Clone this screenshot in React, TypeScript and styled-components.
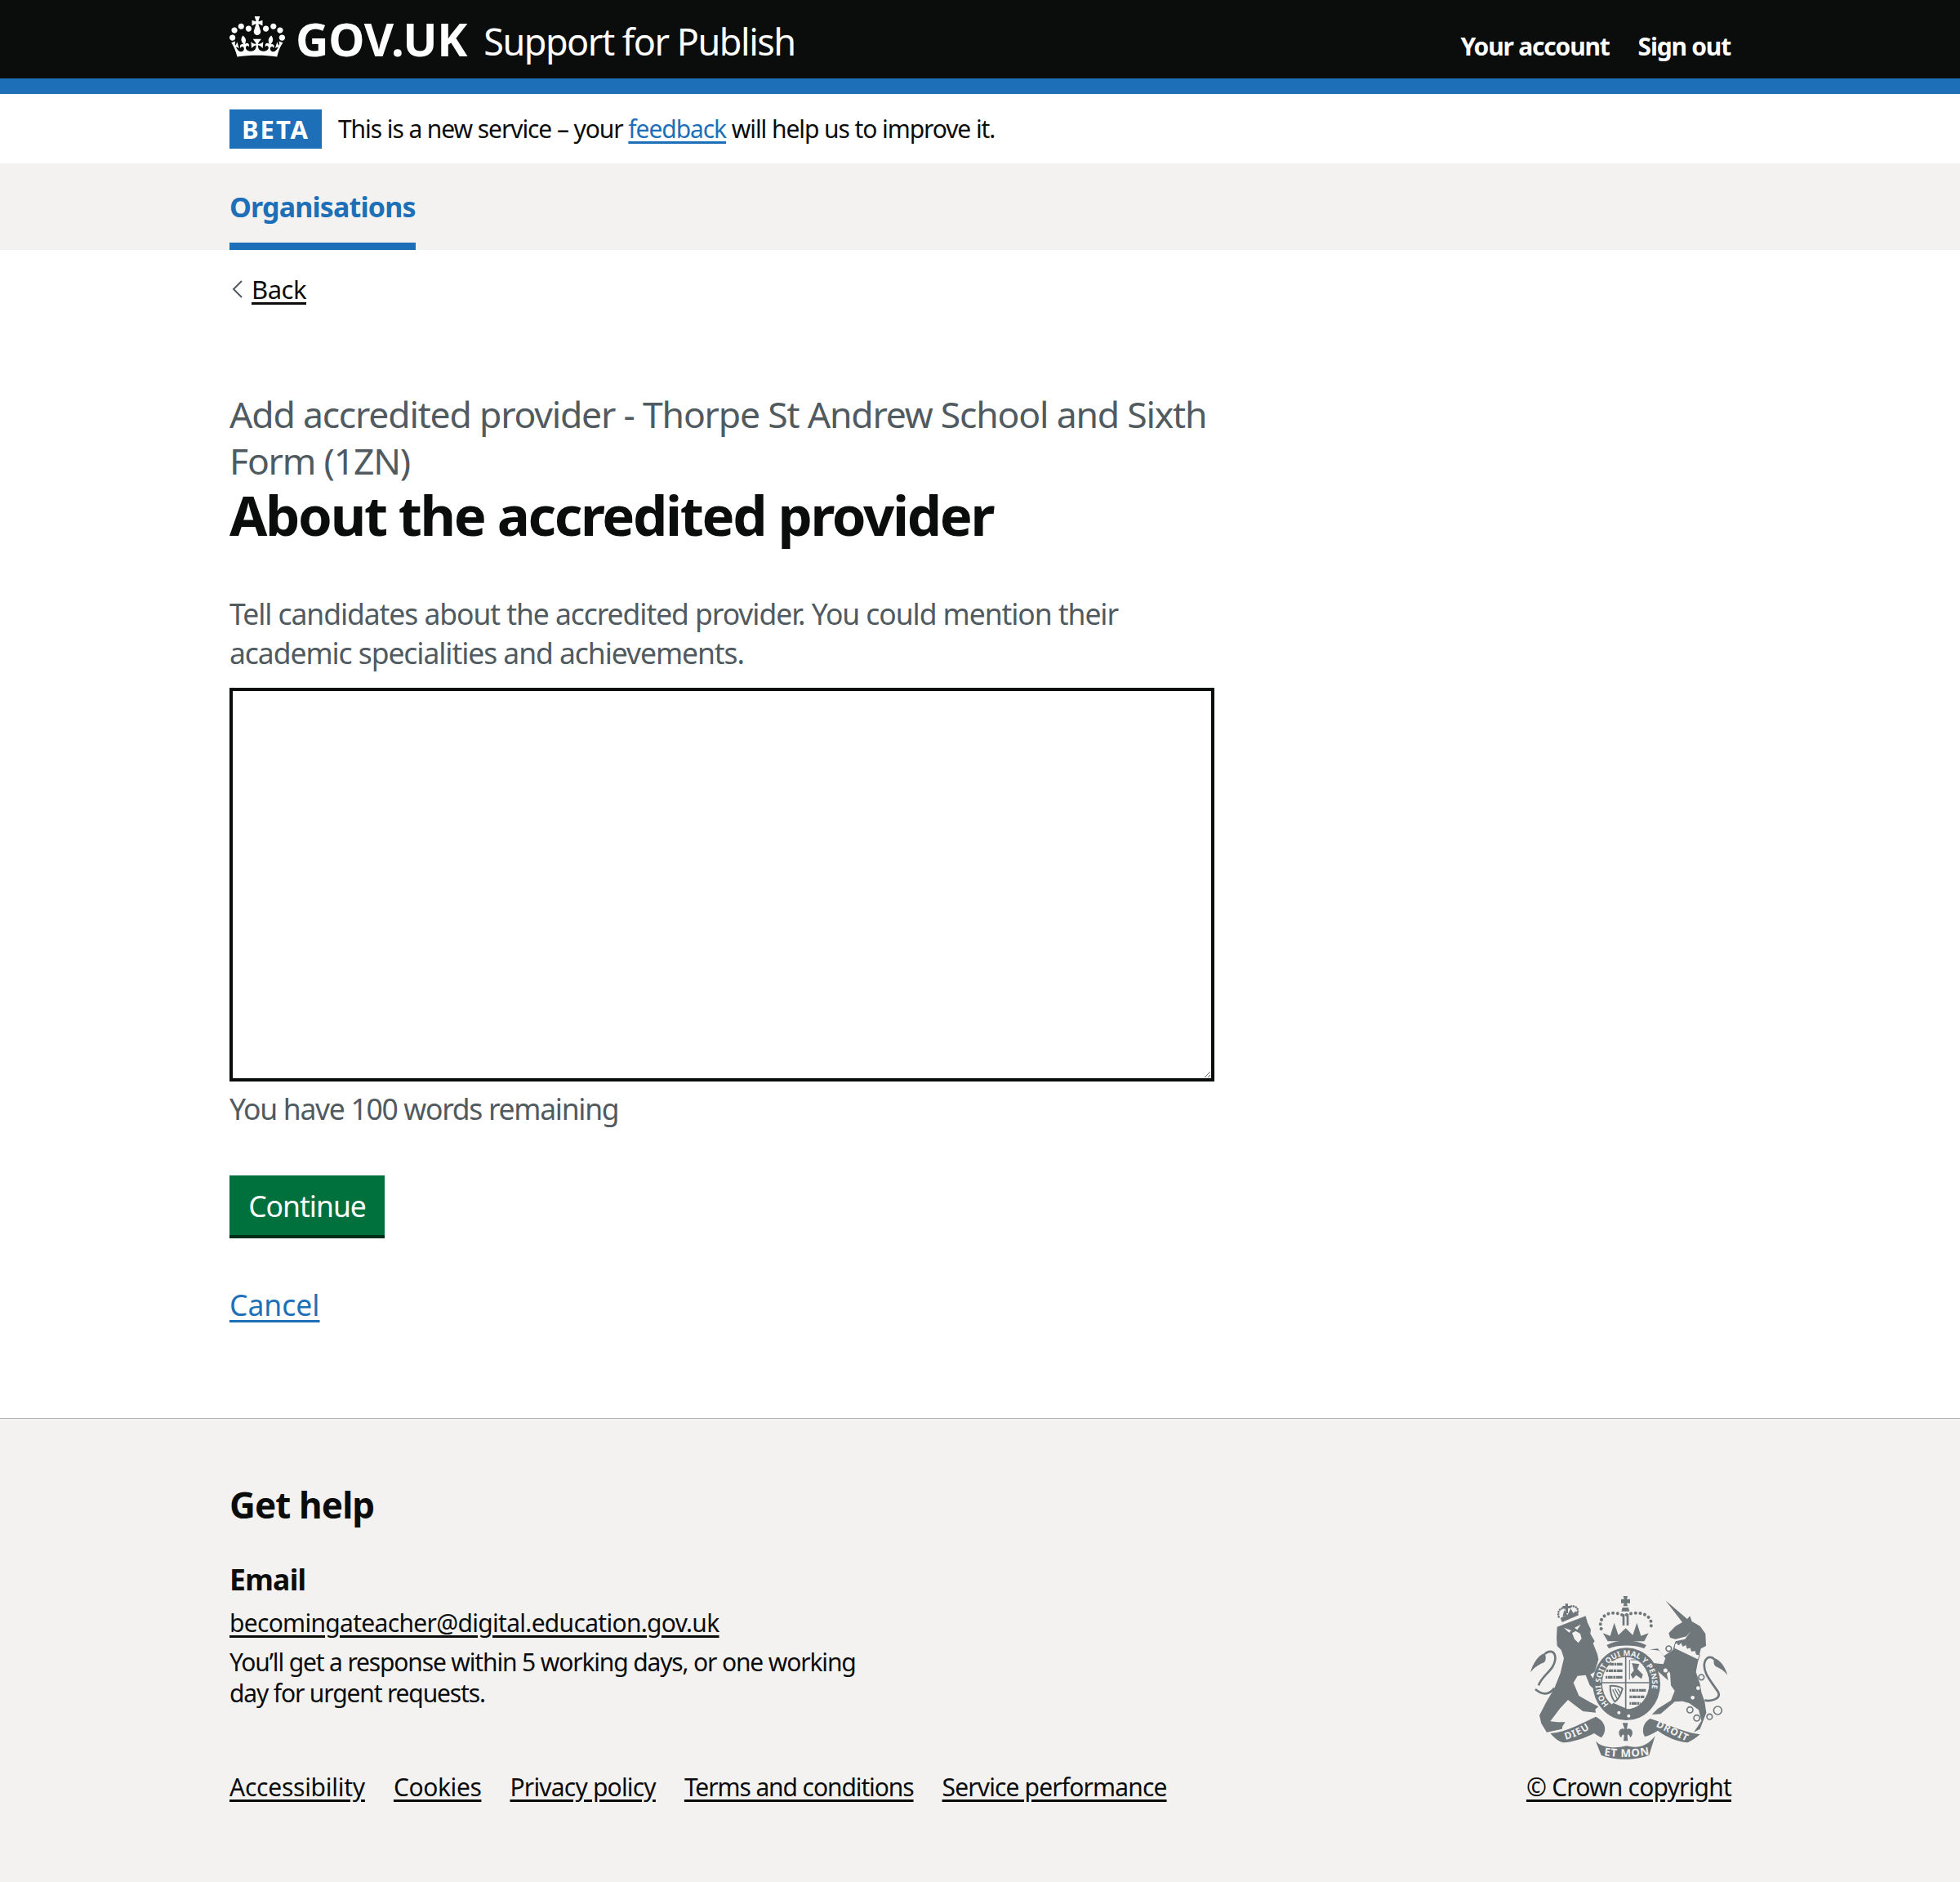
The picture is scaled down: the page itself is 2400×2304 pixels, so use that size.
import React from "react";
import styled, { createGlobalStyle } from "styled-components";

const Global = createGlobalStyle`
  html, body { margin: 0; padding: 0; background: #fff; }
  body { font-family: "Noto Sans", "Open Sans", Arial, sans-serif; color: #0b0c0c; }
  * { box-sizing: border-box; }
`;

const Band = styled.div`
  padding: 0 280px 0 281px;
`;

const Header = styled(Band)`
  background: #0b0c0c;
  height: 115px;
  border-bottom: 19px solid #1d70b8;
  display: flex;
  justify-content: space-between;
  align-items: flex-start;
  color: #fff;
`;

const Brand = styled.div`
  display: flex;
  align-items: flex-start;
  padding-top: 20px;
`;

const Crown = styled.svg`
  width: 68px;
  height: 50px;
  fill: #fff;
  flex: none;
`;

const Logotype = styled.span`
  font-size: 56px;
  font-weight: 700;
  line-height: 48px;
  letter-spacing: -0.3px;
  margin: 3px 0 0 13px;
`;

const ServiceName = styled.span`
  font-size: 45px;
  line-height: 60px;
  letter-spacing: -1.5px;
  margin: 1px 0 0 20px;
`;

const HeaderNav = styled.nav`
  display: flex;
  gap: 35px;
  padding-top: 36px;
  padding-right: 1px;
`;

const HeaderLink = styled.a`
  font-size: 30px;
  line-height: 42px;
  letter-spacing: -1.2px;
  font-weight: 700;
  color: #fff;
`;

const BetaBanner = styled(Band)`
  height: 85px;
  display: flex;
  align-items: center;
  gap: 20px;
  padding-top: 1px;
  border-bottom: 1px solid #fff;
`;

const BetaTag = styled.strong`
  display: block;
  width: 113px;
  height: 48px;
  background: #1d70b8;
  color: #fff;
  font-size: 31px;
  line-height: 48px;
  letter-spacing: 2px;
  text-align: center;
`;

const BetaText = styled.span`
  font-size: 30px;
  line-height: 48px;
  letter-spacing: -1.08px;
`;

const InlineLink = styled.a`
  color: #1d70b8;
  text-decoration: underline;
  text-underline-offset: 4px;
`;

const SubNav = styled(Band)`
  background: #f3f2f1;
  height: 106px;
`;

const SubNavItem = styled.a`
  display: inline-block;
  height: 106px;
  padding-top: 30px;
  border-bottom: 9px solid #1d70b8;
  color: #1d70b8;
  font-size: 34px;
  line-height: 46px;
  letter-spacing: -0.85px;
  font-weight: 700;
`;

const Main = styled(Band)`
  height: 1430px;
  padding-top: 28px;
`;

const BackLink = styled.a`
  display: inline-flex;
  align-items: center;
  gap: 10px;
  font-size: 31px;
  line-height: 40px;
  letter-spacing: -0.5px;
  color: #0b0c0c;
  text-decoration: underline;
  text-underline-offset: 4px;
`;

const Chevron = styled.svg`
  width: 15px;
  height: 24px;
  fill: none;
  stroke: #505a5f;
  stroke-width: 2;
  flex: none;
  margin-left: 2px;
`;

const Form = styled.div`
  width: 1206px;
  margin-top: 104px;
`;

const Caption = styled.div`
  font-size: 44.5px;
  line-height: 57px;
  letter-spacing: -1.2px;
  color: #505a5f;
`;

const Title = styled.h1`
  margin: 0;
  font-size: 67px;
  line-height: 76px;
  letter-spacing: -2.3px;
  font-weight: 700;
`;

const Hint = styled.p`
  margin: 59px 0 0;
  font-size: 35.5px;
  line-height: 48px;
  letter-spacing: -1.07px;
  color: #505a5f;
`;

const TextArea = styled.textarea`
  display: block;
  width: 1206px;
  height: 482px;
  margin-top: 19px;
  border: 4px solid #0b0c0c;
  border-radius: 0;
  background: #fff;
  outline: none;
`;

const CountMessage = styled.div`
  margin-top: 9px;
  font-size: 35.5px;
  line-height: 48px;
  letter-spacing: -1.3px;
  color: #505a5f;
`;

const Button = styled.button`
  display: block;
  width: 190px;
  height: 77px;
  margin-top: 58px;
  padding: 0;
  border: 0;
  border-bottom: 4px solid #002d18;
  background: #00703c;
  color: #fff;
  font-family: inherit;
  font-size: 35.5px;
  line-height: 48px;
  letter-spacing: -1px;
`;

const CancelLink = styled.a`
  display: inline-block;
  margin-top: 57px;
  font-size: 35.5px;
  line-height: 48px;
  color: #1d70b8;
  text-decoration: underline;
  text-underline-offset: 5px;
`;

const Footer = styled(Band)`
  background: #f3f2f1;
  border-top: 1px solid #b1b4b6;
  height: 568px;
  padding-top: 75px;
  display: grid;
  grid-template-columns: 1fr auto;
  align-items: start;
`;

const FooterMain = styled.div`
  display: flex;
  flex-direction: column;
`;

const HelpTitle = styled.h2`
  margin: 0;
  font-size: 44px;
  line-height: 60px;
  letter-spacing: -0.9px;
  font-weight: 700;
`;

const EmailTitle = styled.h3`
  margin: 37px 0 0;
  font-size: 35.5px;
  line-height: 48px;
  letter-spacing: -0.7px;
  font-weight: 700;
`;

const FooterLink = styled.a<{ $tracking: number }>`
  font-size: 30px;
  line-height: 38px;
  letter-spacing: ${(p) => p.$tracking}px;
  color: #0b0c0c;
  text-decoration: underline;
  text-underline-offset: 4px;
`;

const EmailRow = styled.div`
  margin-top: 11px;
  line-height: 38px;
  display: flex;
`;

const HelpText = styled.p`
  margin: 10px 0 0;
  width: 790px;
  font-size: 30px;
  line-height: 38px;
  letter-spacing: -1.15px;
`;

const FooterLinks = styled.div`
  display: flex;
  gap: 35px;
  line-height: 38px;
  margin-top: 77px;
`;

const Copyright = styled.div`
  align-self: end;
  display: flex;
  flex-direction: column;
  align-items: flex-end;
  padding-bottom: 97px;
  line-height: 38px;
`;

const CrestSvg = styled.svg`
  display: block;
  width: 250px;
  height: 210px;
  margin-bottom: 9px;
`;

const crest = "#6f777b";
const bg = "#f3f2f1";

const Crest = () => (
  <CrestSvg viewBox="0 0 750 630" role="img" aria-label="Royal coat of arms">
    <defs>
      <path id="garter" d="M300 410 A94 104 0 1 1 430 410" />
      <path id="ribbonLeft" d="M142 540 Q195 525 245 490" />
      <path id="ribbonRight" d="M472 490 Q525 518 590 548" />
      <path id="ribbonMid" d="M278 596 Q365 610 452 594" />
    </defs>

    {/* lion */}
    <g fill={crest}>
      <path d="M110 125 L215 85 L222 110 L234 135 L232 150 L248 178 L242 185 L258 225 L262 245 L248 290 L232 300 L250 325 L275 345 L262 352 L270 362 L250 358 L230 340 L215 302 L185 305 L170 330 L190 378 L232 402 L262 418 L250 428 L252 440 L205 435 L172 410 L150 393 L120 425 L85 472 L112 475 L140 475 L130 490 L128 500 L72 512 L52 480 L45 450 L68 405 L100 350 L122 295 L135 240 L125 210 L110 195 L108 165 Z" />
      <path d="M65 222 C40 228 20 262 12 292 C28 272 46 262 62 256 C70 248 70 236 65 222 Z" />
      <path d="M100 350 C80 376 55 376 30 354 M42 340 C55 300 106 282 103 235 C100 210 76 212 65 225" fill="none" stroke={crest} strokeWidth="8" />
      <path d="M135 128 L162 138 L154 146 Z M197 116 L174 128 L184 136 Z M165 148 L178 140 L195 150 L200 168 L188 184 L174 170 Z" fill={bg} />
      <path d="M122 92 L185 68 L189 82 L128 108 Z" />
      <path d="M116 88 C108 62 130 50 146 58 C160 42 190 48 186 70" fill="none" stroke={crest} strokeWidth="8" strokeLinecap="round" strokeDasharray="0.1 9" />
      <path d="M140 40 h10 v8 h10 v9 h-10 v18 h-10 v-18 h-10 v-9 h10 Z" />
      <path d="M130 88 L136 64 L148 82 L160 58 L170 76 L178 66 L180 76 Z" />
    </g>

    {/* royal crown */}
    <g fill={crest}>
      <path d="M353 12 h16 l-3 11 h12 v15 h-12 l3 11 h-16 l3 -11 h-11 v-15 h11 Z" />
      <path d="M350 54 h22 l4 14 h-30 Z" />
      <rect x="350" y="78" width="8" height="42" />
      <rect x="365" y="78" width="8" height="42" />
      <path d="M272 132 C258 92 298 56 355 84 C425 56 470 92 452 132" fill="none" stroke={crest} strokeWidth="12" strokeLinecap="round" strokeDasharray="0.1 17" />
      <path d="M278 148 L305 158 L320 110 L335 155 L362 130 L388 155 L403 110 L418 158 L446 148 L430 178 L296 178 Z" />
      <path d="M292 192 C335 170 392 170 438 192 L430 204 C392 190 335 190 300 204 Z" />
    </g>

    {/* garter, shield */}
    <g>
      <ellipse cx="365" cy="335" rx="124" ry="133" fill={crest} />
      <ellipse cx="362" cy="332" rx="88" ry="98" fill={bg} stroke={crest} strokeWidth="3" />
      <path d="M362 234 V430 M275 330 H450" stroke={crest} strokeWidth="5" />
      <g fill="none" stroke={crest} strokeWidth="10">
        <path d="M296 262 h54" strokeDasharray="6 2 14 2 8 2 20 2" />
        <path d="M290 286 h60" strokeDasharray="8 2 16 2 10 2 22 2" />
        <path d="M288 310 h62" strokeDasharray="6 2 18 2 8 2 24 2" />
        <path d="M376 358 h60" strokeDasharray="6 2 14 2 8 2 30 2" />
        <path d="M376 382 h54" strokeDasharray="8 2 16 2 10 2 22 2" />
        <path d="M376 406 h40" strokeDasharray="6 2 18 2 8 2 24 2" />
      </g>
      <path d="M385 258 L412 262 L405 280 L425 300 L420 316 L400 302 L388 316 L380 300 L392 285 Z" fill={crest} />
      <path d="M380 246 H436 M376 246 V318" stroke={crest} strokeWidth="3" fill="none" />
      <path d="M305 342 C320 340 345 345 350 352 C345 372 335 392 322 400 C312 390 304 365 305 342 Z" fill="none" stroke={crest} strokeWidth="6" />
      <path d="M314 355 L332 392 M322 352 L338 380 M332 352 L344 370" stroke={crest} strokeWidth="4" />
      <path d="M292 432 L316 404 L372 428 L412 418 L432 396 L448 420 C420 462 335 478 292 432 Z" fill={crest} />
      <circle cx="337" cy="440" r="6" fill={bg} />
      <circle cx="373" cy="452" r="6" fill={bg} />
    </g>

    {/* ribbons and fleur */}
    <g fill={crest}>
      <path d="M85 516 C150 510 200 478 252 455 C285 470 298 505 272 532 C262 526 252 520 246 516 C210 535 168 548 132 550 C112 545 98 530 85 516 Z" />
      <path d="M635 520 C575 512 520 485 452 462 C428 475 418 505 432 528 C448 525 462 516 480 506 C510 530 548 545 590 550 C606 542 622 532 635 520 Z" />
      <path d="M252 545 C276 570 325 572 365 562 C405 572 440 565 470 525 L448 596 C400 616 320 616 272 596 Z" />
      <path d="M350 478 h20 l-4 22 c18 -8 30 16 12 32 c-2 -12 -8 -14 -10 -8 l2 20 h-16 l2 -20 c-2 -6 -8 -4 -10 8 c-18 -16 -6 -40 12 -32 Z" />
    </g>

    {/* unicorn */}
    <g fill={crest} transform="translate(330 0)">
      <path d="M178 28 L258 96 L268 85 L275 105 L305 122 L325 150 L327 195 L308 205 L300 240 L290 290 L305 335 L310 365 L322 400 L328 440 L305 500 L282 512 L310 470 L300 430 L265 405 L240 398 L212 400 L160 445 L128 447 L150 425 L198 395 L212 360 L198 340 L195 295 L178 272 L188 322 L150 288 L135 258 L170 262 L178 240 L155 212 L120 208 L150 205 L172 232 L205 210 L215 178 L250 170 L272 140 L255 160 L215 170 L195 165 L190 148 L215 122 L240 108 Z" />
      <path d="M358 240 C378 246 398 272 406 302 C392 284 376 276 362 270 C354 262 354 250 358 240 Z" />
      <path d="M322 395 C350 400 382 388 372 365 C350 330 312 292 322 255 C330 230 350 234 358 245" fill="none" stroke={crest} strokeWidth="8" />
      <path d="M212 190 L220 182 L226 192 L236 182 L242 196 L254 190 L258 204 L270 200 L274 214 L288 212 L292 226 L304 228 L298 246 L210 204 Z" fill={bg} stroke={crest} strokeWidth="3" />
      <circle cx="298" cy="350" r="7" fill={bg} />
      <circle cx="278" cy="385" r="7" fill={bg} />
      <g fill={bg} stroke={crest} strokeWidth="5">
        <circle cx="190" cy="205" r="10" />
        <circle cx="178" cy="285" r="10" />
        <circle cx="310" cy="310" r="10" />
        <circle cx="268" cy="430" r="11" />
        <circle cx="293" cy="460" r="11" />
        <circle cx="340" cy="455" r="10" />
        <circle cx="370" cy="432" r="15" />
      </g>
    </g>

    <g fill={bg} fontFamily="'Noto Sans', sans-serif" fontWeight="700">
      <text fontSize="28" letterSpacing="0.5"><textPath href="#garter" startOffset="0">HONI SOIT QUI MAL Y PENSE</textPath></text>
      <text fontSize="36" letterSpacing="3"><textPath href="#ribbonLeft">DIEU</textPath></text>
      <text fontSize="36" letterSpacing="3"><textPath href="#ribbonRight">DROIT</textPath></text>
      <text fontSize="40" letterSpacing="2"><textPath href="#ribbonMid" startOffset="4">ET MON</textPath></text>
    </g>
  </CrestSvg>
);

export default function App() {
  return (
    <>
      <Global />
      <Header>
        <Brand>
          <Crown viewBox="0 0 132 97" aria-hidden="true">
            <path d="M25 30.2c3.5 1.5 7.7-.2 9.1-3.7 1.5-3.6-.2-7.8-3.9-9.2-3.6-1.4-7.6.3-9.1 3.9-1.4 3.5.3 7.5 3.9 9zM9 39.5c3.6 1.5 7.8-.2 9.2-3.7 1.5-3.6-.2-7.8-3.9-9.1-3.6-1.5-7.6.2-9.1 3.8-1.4 3.5.3 7.5 3.8 9zM4.4 57.2c3.5 1.5 7.7-.2 9.1-3.8 1.5-3.6-.2-7.7-3.9-9.1-3.5-1.5-7.6.3-9.1 3.8-1.4 3.5.3 7.6 3.9 9.1zm38.3-21.4c3.5 1.5 7.7-.2 9.1-3.8 1.5-3.6-.2-7.7-3.9-9.1-3.6-1.5-7.6.3-9.1 3.8-1.3 3.6.4 7.7 3.9 9.1zm64.4-5.6c-3.6 1.5-7.8-.2-9.1-3.7-1.5-3.6.2-7.8 3.8-9.2 3.6-1.4 7.7.3 9.2 3.9 1.3 3.5-.4 7.5-3.9 9zm15.9 9.3c-3.6 1.5-7.7-.2-9.1-3.7-1.5-3.6.2-7.8 3.7-9.1 3.6-1.5 7.7.2 9.2 3.8 1.5 3.5-.3 7.5-3.8 9zm4.7 17.7c-3.6 1.5-7.8-.2-9.2-3.8-1.5-3.6.2-7.7 3.9-9.1 3.6-1.5 7.7.3 9.2 3.8 1.3 3.5-.4 7.6-3.9 9.1zM89.3 35.8c-3.6 1.5-7.8-.2-9.2-3.8-1.4-3.6.2-7.7 3.9-9.1 3.6-1.5 7.7.3 9.2 3.8 1.4 3.6-.3 7.7-3.9 9.1zM69.7 17.7l8.9 4.7V9.3l-8.9 2.8c-.2-.3-.5-.6-.9-.9L72.4 0H59.6l3.5 11.2c-.3.3-.6.5-.9.9l-8.8-2.8v13.1l8.8-4.7c.3.3.6.7.9.9l-5 15.4v.1c-.2.8-.4 1.6-.4 2.4 0 4.1 3.1 7.5 7 8.1h.2c.3 0 .7.1 1 .1.4 0 .7 0 1-.1h.2c4-.6 7.1-4.1 7.1-8.1 0-.8-.1-1.7-.4-2.4V34l-5.1-15.4c.4-.2.7-.6 1-.9zM66 92.8c16.9 0 32.8 1.1 47.1 3.2 4-16.9 8.9-26.7 14-33.5l-9.6-3.4c1 4.9 1.1 7.2 0 10.2-1.5-1.4-3-4.3-4.2-8.7L108.6 76c2.8-2 5-3.2 7.5-3.3-4.4 9.4-10 11.9-13.6 11.2-4.3-.8-6.3-4.6-5.6-7.9 1-4.7 5.7-5.9 8-.5 4.3-8.7-3-11.4-7.6-8.8 7.1-7.2 7.9-13.5 2.1-21.1-8 6.1-8.1 12.3-4.5 20.8-4.7-5.4-12.1-2.5-9.5 6.2 3.4-5.2 7.9-2 7.2 3.1-.6 4.3-6.4 7.8-13.5 7.2-10.3-.9-10.9-8-11.2-13.8 2.5-.5 7.1 1.8 11 7.3L80.2 60c-4.1 4.4-8 5.3-12.3 5.4 1.4-4.4 8-11.6 8-11.6H55.5s6.4 7.2 7.9 11.6c-4.2-.1-8-1-12.3-5.4l1.4 16.4c3.9-5.5 8.5-7.7 10.9-7.3-.3 5.8-.9 12.8-11.1 13.8-7.2.6-12.9-2.9-13.5-7.2-.7-5 3.8-8.3 7.1-3.1 2.7-8.7-4.6-11.6-9.4-6.2 3.7-8.5 3.6-14.7-4.6-20.8-5.8 7.6-5 13.9 2.2 21.1-4.7-2.6-11.9.1-7.7 8.8 2.3-5.5 7.1-4.2 8.1.5.7 3.3-1.3 7.1-5.7 7.9-3.5.7-9-1.8-13.5-11.2 2.5.1 4.7 1.3 7.5 3.3l-4.7-15.4c-1.2 4.4-2.7 7.2-4.3 8.7-1.1-3-.9-5.3 0-10.2l-9.5 3.4c5 6.9 9.9 16.7 14 33.5 14.8-2.1 30.8-3.2 47.7-3.2z" />
          </Crown>
          <Logotype>GOV.UK</Logotype>
          <ServiceName>Support for Publish</ServiceName>
        </Brand>
        <HeaderNav>
          <HeaderLink>Your account</HeaderLink>
          <HeaderLink>Sign out</HeaderLink>
        </HeaderNav>
      </Header>
      <BetaBanner>
        <BetaTag>BETA</BetaTag>
        <BetaText>
          This is a new service – your <InlineLink href="#">feedback</InlineLink> will help us to improve it.
        </BetaText>
      </BetaBanner>
      <SubNav>
        <SubNavItem>Organisations</SubNavItem>
      </SubNav>
      <Main>
        <BackLink href="#">
          <Chevron viewBox="0 0 15 24" aria-hidden="true">
            <path d="M13 2 L3 12 L13 22" />
          </Chevron>
          Back
        </BackLink>
        <Form>
          <Caption>Add accredited provider - Thorpe St Andrew School and Sixth Form (1ZN)</Caption>
          <Title>About the accredited provider</Title>
          <Hint>Tell candidates about the accredited provider. You could mention their academic specialities and achievements.</Hint>
          <TextArea aria-label="About the accredited provider" />
          <CountMessage>You have 100 words remaining</CountMessage>
          <Button>Continue</Button>
          <CancelLink href="#">Cancel</CancelLink>
        </Form>
      </Main>
      <Footer>
        <FooterMain>
          <HelpTitle>Get help</HelpTitle>
          <EmailTitle>Email</EmailTitle>
          <EmailRow>
            <FooterLink href="#" $tracking={-0.7}>becomingateacher@digital.education.gov.uk</FooterLink>
          </EmailRow>
          <HelpText>You’ll get a response within 5 working days, or one working day for urgent requests.</HelpText>
          <FooterLinks>
            <FooterLink href="#" $tracking={-0.25}>Accessibility</FooterLink>
            <FooterLink href="#" $tracking={-0.4}>Cookies</FooterLink>
            <FooterLink href="#" $tracking={-0.8}>Privacy policy</FooterLink>
            <FooterLink href="#" $tracking={-1.1}>Terms and conditions</FooterLink>
            <FooterLink href="#" $tracking={-0.85}>Service performance</FooterLink>
          </FooterLinks>
        </FooterMain>
        <Copyright>
          <Crest />
          <FooterLink href="#" $tracking={-0.8}>© Crown copyright</FooterLink>
        </Copyright>
      </Footer>
    </>
  );
}
